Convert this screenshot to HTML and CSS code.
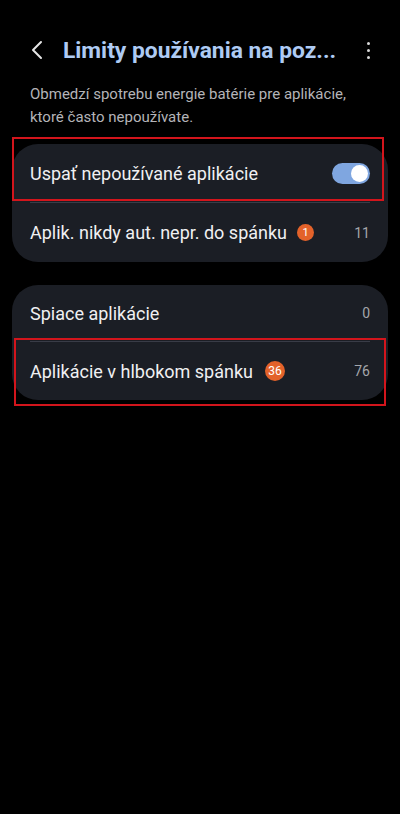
FILE: index.html
```html
<!DOCTYPE html>
<html lang="sk">
<head>
  <meta charset="UTF-8">
  <meta name="viewport" content="width=device-width, initial-scale=1.0">
  <link rel="stylesheet" href="styles.css">
  <title>Limity používania na pozadí</title>
</head>
<body>
  <div class="screen">
    <div class="header">
      <div class="back">
        <svg width="12" height="20" viewBox="0 0 12 20"><path d="M10 2 L2 10 L10 18" fill="none" stroke="#e6e6e6" stroke-width="2" stroke-linecap="round" stroke-linejoin="round"/></svg>
      </div>
      <h1 class="title">Limity používania na poz...</h1>
      <div class="more">
        <span class="dot"></span>
        <span class="dot"></span>
        <span class="dot"></span>
      </div>
    </div>

    <p class="desc">Obmedzí spotrebu energie batérie pre aplikácie, ktoré často nepoužívate.</p>

    <div class="card card-first">
      <div class="row row-top">
        <span class="label">Uspať nepoužívané aplikácie</span>
        <div class="toggle"><span class="knob"></span></div>
      </div>
      <div class="divider"></div>
      <div class="row row-bottom">
        <span class="label">Aplik. nikdy aut. nepr. do spánku</span>
        <span class="badge badge-small">1</span>
        <span class="count">11</span>
      </div>
      <div class="mark mark-one"></div>
    </div>

    <div class="card card-second">
      <div class="row row-a">
        <span class="label">Spiace aplikácie</span>
        <span class="count">0</span>
      </div>
      <div class="divider"></div>
      <div class="row row-b">
        <span class="label">Aplikácie v hlbokom spánku</span>
        <span class="badge">36</span>
        <span class="count">76</span>
      </div>
      <div class="mark mark-two"></div>
    </div>
  </div>
</body>
</html>
```

FILE: styles.css
```css
body {
  margin: 0;
  background-color: #000;
  font-family: Roboto, "Noto Sans", sans-serif;
  color: #f0f0f2;
}

.screen {
  width: 400px;
  min-height: 814px;
  padding-top: 22px;
  box-sizing: border-box;
}

.header {
  display: flex;
  align-items: center;
  height: 56px;
  padding: 0 30px 0 31px;
}

.back {
  display: flex;
  width: 32px;
}

.title {
  flex: 1;
  margin: 0;
  font-size: 22.8px;
  font-weight: 700;
  color: #aecbf4;
  white-space: nowrap;
}

.more {
  display: flex;
  flex-direction: column;
  align-items: center;
  gap: 4px;
  width: 4px;
}

.dot {
  width: 3px;
  height: 3px;
  border-radius: 50%;
  background-color: #d8d8d8;
}

.desc {
  margin: 5px 0 0;
  padding: 0 30px;
  font-size: 15px;
  line-height: 23px;
  color: #b4b4b8;
}

.card {
  position: relative;
  margin: 0 12px;
  background-color: #1b1e25;
  border-radius: 26px;
}

.card-first {
  margin-top: 15px;
}

.card-second {
  margin-top: 23px;
}

.row {
  display: flex;
  align-items: center;
  padding: 0 18px;
}

.row-top {
  height: 58px;
}

.row-bottom {
  height: 59px;
}

.row-a {
  height: 56px;
}

.row-b {
  height: 58px;
}

.label {
  font-size: 18px;
  color: #f0f0f2;
}

.count {
  margin-left: auto;
  font-size: 14px;
  color: #a4a6ab;
}

.divider {
  height: 1px;
  margin: 0 18px;
  background-color: #393c47;
}

.badge {
  display: flex;
  justify-content: center;
  align-items: center;
  width: 20px;
  height: 20px;
  margin-left: 12px;
  border-radius: 50%;
  background-color: #e3622a;
  color: #fff;
  font-size: 12px;
}

.badge-small {
  width: 17px;
  height: 17px;
  font-size: 11px;
  margin-left: 10px;
}

.toggle {
  display: flex;
  justify-content: flex-end;
  align-items: center;
  margin-left: auto;
  width: 38px;
  height: 21px;
  padding: 0 2px;
  box-sizing: border-box;
  border-radius: 11px;
  background-color: #7fa6e0;
}

.knob {
  width: 17px;
  height: 17px;
  border-radius: 50%;
  background-color: #fff;
}

.mark {
  position: absolute;
  border: 2px solid #d3151c;
  box-sizing: border-box;
}

.mark-one {
  top: -7px;
  left: 0;
  width: 372px;
  height: 64px;
}

.mark-two {
  top: 53px;
  left: 2px;
  width: 372px;
  height: 68px;
}
```
